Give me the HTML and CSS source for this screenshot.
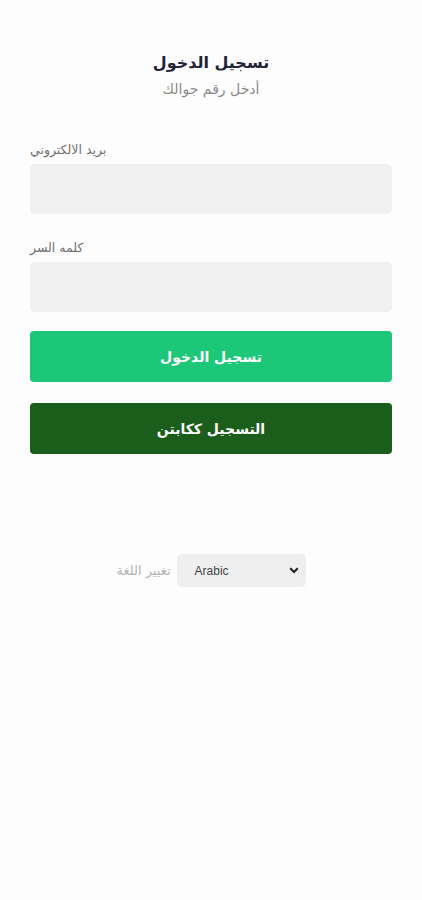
FILE: index.html
```html
<!DOCTYPE html>
<html lang="ar">
<head>
<meta charset="utf-8">
<link rel="stylesheet" href="styles.css">
</head>
<body>
<main class="page">
  <header class="head">
    <h1 class="title">تسجيل الدخول</h1>
    <p class="subtitle">أدخل رقم جوالك</p>
  </header>
  <form class="form">
    <div class="field">
      <label class="label">بريد الالكتروني</label>
      <input class="input" type="text">
    </div>
    <div class="field">
      <label class="label">كلمه السر</label>
      <input class="input" type="password">
    </div>
    <button type="button" class="btn btn-primary">تسجيل الدخول</button>
    <button type="button" class="btn btn-dark">التسجيل ككابتن</button>
  </form>
  <div class="lang">
    <span class="lang-label">تغيير اللغة</span>
    <div class="select">
      <span class="select-text">Arabic</span>
      <svg class="chev" width="10" height="7" viewBox="0 0 10 7"><path d="M1.2 1.3 L5 5 L8.8 1.3" fill="none" stroke="#222" stroke-width="2"/></svg>
    </div>
  </div>
</main>
</body>
</html>
```
FILE: styles.css
```css
* { box-sizing: border-box; }
html, body { margin: 0; padding: 0; background: #fdfdfd; }
body { font-family: "DejaVu Sans", "Noto Sans", sans-serif; width: 422px; height: 900px; }
.page { padding: 52px 30px 0 30px; display: flex; flex-direction: column; }
.head { display: flex; flex-direction: column; align-items: center; }
.title { margin: 0; font-size: 16px; font-weight: bold; color: #23233a; line-height: 22px; direction: rtl; }
.subtitle { margin: 6px 0 0; font-size: 14px; color: #8a8a8a; line-height: 18px; direction: rtl; }
.form { margin-top: 45px; display: flex; flex-direction: column; }
.field { display: flex; flex-direction: column; align-items: flex-start; margin-bottom: 27px; }
.field:nth-child(2) { margin-bottom: 19px; }
.label { font-size: 12.5px; color: #707070; line-height: 14px; direction: rtl; margin-bottom: 7px; }
.input { width: 362px; height: 50px; border: none; border-radius: 5px; background: #f0f0f0; outline: none; }
.btn { width: 362px; height: 51px; border: none; border-radius: 4px; font-family: inherit; font-size: 14px; font-weight: bold; color: #fff; direction: rtl; }
.btn-primary { background: #1cc778; }
.btn-dark { background: #1b5d1b; margin-top: 21px; }
.lang { margin-top: 100px; display: flex; justify-content: center; align-items: center; gap: 6px; }
.lang-label { font-size: 13px; color: #b5b5b5; direction: rtl; }
.select { width: 129px; height: 33px; background: #efefef; border-radius: 5px; display: flex; align-items: center; justify-content: space-between; padding: 0 7px 0 18px; }
.select-text { font-size: 12px; color: #444; font-family: "Liberation Sans", sans-serif; }
```
